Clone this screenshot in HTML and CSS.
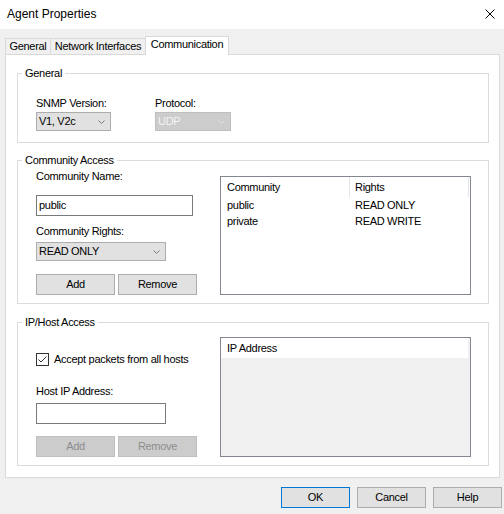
FILE: index.html
```html
<!DOCTYPE html>
<html>
<head>
<meta charset="utf-8">
<title>Agent Properties</title>
<link rel="stylesheet" href="styles.css">
</head>
<body>
<div class="window">
  <div class="titlebar">
    <span class="title">Agent Properties</span>
    <svg class="close" width="10" height="10" viewBox="0 0 10 10"><path d="M0.5 0.5 L9.5 9.5 M9.5 0.5 L0.5 9.5" stroke="#000" stroke-width="1" fill="none"/></svg>
  </div>
  <div class="tabs">
    <div class="tab tab-general">General</div>
    <div class="tab tab-net">Network Interfaces</div>
    <div class="tab tab-active">Communication</div>
  </div>
  <div class="panel">
    <fieldset class="group group-general">
      <legend>General</legend>
      <div class="gen-row">
        <div class="field field-snmp">
          <div class="label">SNMP Version:</div>
          <div class="select select-snmp"><span>V1, V2c</span><svg class="chev" width="7" height="4" viewBox="0 0 7 4"><polyline points="0.5,0.5 3.5,3.5 6.5,0.5" fill="none" stroke="#7a7a7a" stroke-width="1"/></svg></div>
        </div>
        <div class="field field-proto">
          <div class="label">Protocol:</div>
          <div class="select select-proto disabled"><span>UDP</span><svg class="chev" width="7" height="4" viewBox="0 0 7 4"><polyline points="0.5,0.5 3.5,3.5 6.5,0.5" fill="none" stroke="#e4e4e4" stroke-width="1"/></svg></div>
        </div>
      </div>
    </fieldset>

    <fieldset class="group group-community">
      <legend>Community Access</legend>
      <div class="split">
        <div class="left-col">
          <div class="label">Community Name:</div>
          <div class="input input-name">public</div>
          <div class="label label-rights">Community Rights:</div>
          <div class="select select-rights"><span>READ ONLY</span><svg class="chev" width="7" height="4" viewBox="0 0 7 4"><polyline points="0.5,0.5 3.5,3.5 6.5,0.5" fill="none" stroke="#7a7a7a" stroke-width="1"/></svg></div>
          <div class="btn-row btn-row-comm">
            <div class="btn">Add</div>
            <div class="btn">Remove</div>
          </div>
        </div>
        <div class="list list-comm">
          <div class="lv-grid">
            <div class="lv-h lv-c1">Community</div>
            <div class="lv-h lv-c2">Rights</div>
            <div class="lv-r lv-c1">public</div>
            <div class="lv-r lv-c2">READ ONLY</div>
            <div class="lv-r lv-c1">private</div>
            <div class="lv-r lv-c2">READ WRITE</div>
          </div>
        </div>
      </div>
    </fieldset>

    <fieldset class="group group-ip">
      <legend>IP/Host Access</legend>
      <div class="split">
        <div class="left-col">
          <div class="check-row">
            <span class="check"><svg width="11" height="11" viewBox="0 0 11 11"><polyline points="1.5,5.5 4,8 9.5,2.5" fill="none" stroke="#333" stroke-width="1"/></svg></span>
            <span class="check-label">Accept packets from all hosts</span>
          </div>
          <div class="label label-host">Host IP Address:</div>
          <div class="input input-host"></div>
          <div class="btn-row btn-row-ip">
            <div class="btn disabled">Add</div>
            <div class="btn disabled">Remove</div>
          </div>
        </div>
        <div class="list list-ip">
          <div class="ip-head">IP Address</div>
          <div class="ip-body"></div>
        </div>
      </div>
    </fieldset>
  </div>
  <div class="footer">
    <div class="btn btn-foot btn-default">OK</div>
    <div class="btn btn-foot">Cancel</div>
    <div class="btn btn-foot">Help</div>
  </div>
</div>
</body>
</html>
```

FILE: styles.css
```css
html, body {
  margin: 0;
  padding: 0;
  background: #f0f0f0;
}

.window {
  width: 504px;
  height: 514px;
  background: #f0f0f0;
  font-family: "Liberation Sans", Arial, sans-serif;
  font-size: 11px;
  line-height: 13px;
  letter-spacing: -0.3px;
  color: #000;
  overflow: hidden;
  display: flex;
  flex-direction: column;
}

/* title bar */
.titlebar {
  height: 29px;
  flex: none;
  background: #fff;
  display: flex;
  justify-content: space-between;
  align-items: flex-start;
}
.title {
  font-size: 12px;
  line-height: 14px;
  letter-spacing: 0;
  margin: 7px 0 0 7px;
}
.close {
  display: block;
  margin: 9px 9px 0 0;
}

/* tabs */
.tabs {
  display: flex;
  align-items: flex-end;
  height: 19px;
  margin: 7px 0 0 5px;
  position: relative;
  z-index: 1;
  flex: none;
}
.tab {
  box-sizing: border-box;
  height: 16px;
  margin-bottom: 1px;
  border: 1px solid #d9d9d9;
  border-bottom: 0;
  background: #f0f0f0;
  padding-top: 1px;
  text-align: center;
  white-space: nowrap;
}
.tab + .tab {
  border-left: 0;
}
.tab-general { width: 46px; }
.tab-net { width: 95px; }
.tab-active {
  width: 84px;
  height: 19px;
  margin-bottom: 0;
  margin-left: -1px;
  border-left: 1px solid #d9d9d9 !important;
  background: #fff;
  padding-top: 1px;
}

/* panel */
.panel {
  box-sizing: border-box;
  flex: none;
  margin: -1px 0 0 5px;
  width: 495px;
  height: 424px;
  background: #fff;
  border: 1px solid #d9d9d9;
  padding: 12px 10px 0 11px;
}

.group {
  margin: 0;
  min-width: 0;
  border: 1px solid #dcdcdc;
}
.group legend {
  padding: 0 3px;
  margin-left: -14px;
  line-height: 13px;
}
.group-general {
  padding: 17px 0 11px 18px;
}
.group-community {
  margin-top: 11px;
  padding: 3px 16px 8px 18px;
}
.group-ip {
  margin-top: 12px;
  padding: 8px 16px 8px 18px;
}

.label {
  height: 13px;
  white-space: nowrap;
}

/* General row */
.gen-row {
  display: flex;
}
.field-snmp { width: 75px; }
.field-proto { width: 76px; margin-left: 44px; }

.select {
  box-sizing: border-box;
  height: 19px;
  margin-top: 2px;
  border: 1px solid #adadad;
  background: #e1e1e1;
  display: flex;
  align-items: center;
  justify-content: space-between;
  padding: 0 5px 0 2px;
  white-space: nowrap;
}
.select.disabled {
  background: #cccccc;
  border-color: #bfbfbf;
  color: #f4f4f4;
}
.chev {
  display: block;
  flex: none;
}

/* split layout */
.split {
  display: flex;
  align-items: flex-start;
}
.left-col {
  width: 161px;
  flex: none;
}

.input {
  box-sizing: border-box;
  height: 21px;
  border: 1px solid #7a7a7a;
  background: #fff;
  padding: 0 2px;
  line-height: 19px;
}
.input-name {
  width: 157px;
  margin-top: 12px;
}
.label-rights {
  margin-top: 9px;
}
.select-rights {
  width: 130px;
  margin-top: 4px;
}

.btn-row {
  display: flex;
  gap: 3px;
}
.btn-row-comm { margin-top: 13px; }
.btn-row-ip { margin-top: 12px; }

.btn {
  box-sizing: border-box;
  width: 79px;
  height: 21px;
  border: 1px solid #adadad;
  background: #e1e1e1;
  text-align: center;
  line-height: 19px;
  white-space: nowrap;
}
.btn.disabled {
  background: #cccccc;
  border-color: #bfbfbf;
  color: #8c8c8c;
}

/* list views */
.list {
  box-sizing: border-box;
  margin-left: 23px;
  width: 251px;
  border: 1px solid #828790;
  background: #fff;
}
.list-comm {
  margin-top: 6px;
  height: 119px;
}
.lv-grid {
  display: grid;
  grid-template-columns: 129px 119px;
}
.lv-h {
  box-sizing: border-box;
  height: 20px;
  line-height: 20px;
  border-right: 1px solid #e5e5e5;
}
.lv-r {
  height: 16px;
  line-height: 16px;
}
.lv-c1 { padding-left: 6px; }
.lv-c2 { padding-left: 5px; }

.list-ip {
  height: 120px;
  display: flex;
  flex-direction: column;
  background: #f0f0f0;
}
.ip-head {
  height: 20px;
  line-height: 20px;
  padding-left: 6px;
  background: #fff;
  margin-right: 2px;
}
.ip-body {
  flex: 1;
}

/* checkbox */
.check-row {
  margin-top: 16px;
  display: flex;
  align-items: center;
  height: 13px;
}
.check {
  box-sizing: border-box;
  width: 13px;
  height: 13px;
  border: 1px solid #333;
  background: #fff;
  flex: none;
  display: block;
}
.check svg {
  display: block;
}
.check-label {
  margin-left: 5px;
  white-space: nowrap;
  line-height: 13px;
}
.label-host {
  margin-top: 19px;
}
.input-host {
  width: 130px;
  margin-top: 5px;
}

/* footer */
.footer {
  display: flex;
  justify-content: flex-end;
  gap: 7px;
  padding: 9px 2px 0 0;
}
.btn-foot {
  width: 69px;
}
.btn-default {
  border-color: #0078d7;
}
```
